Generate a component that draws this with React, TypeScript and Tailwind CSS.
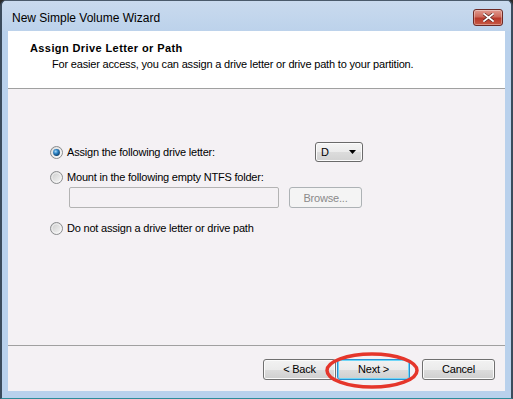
// New Simple Volume Wizard - assign drive letter page

import clsx from 'clsx'

function Radio({ checked }: { checked?: boolean }) {
  return (
    <svg width="13" height="13" viewBox="0 0 13 13" className="shrink-0">
      <defs>
        <linearGradient id="radio-fill" x1="0" y1="0" x2="1" y2="1">
          <stop offset="0" stopColor="#c9c9c9" />
          <stop offset="1" stopColor="#fafafa" />
        </linearGradient>
        <radialGradient id="radio-dot" cx="0.38" cy="0.35" r="0.7">
          <stop offset="0" stopColor="#a8d8f7" />
          <stop offset="0.45" stopColor="#2d83c4" />
          <stop offset="1" stopColor="#0b3a66" />
        </radialGradient>
      </defs>
      <circle cx="6.5" cy="6.5" r="6" fill="url(#radio-fill)" stroke="#8a8c8e" />
      <circle cx="6.5" cy="6.5" r="4.6" fill="none" stroke="#ffffff" strokeOpacity="0.6" />
      {checked && <circle cx="6.5" cy="6.5" r="3.4" fill="url(#radio-dot)" />}
    </svg>
  )
}

function Button({ label, primary }: { label: string; primary?: boolean }) {
  return (
    <div
      className={clsx(
        'w-[73px] h-[21px] rounded-[3px] border flex items-center justify-center text-[11px] tracking-[-0.2px] text-black',
        'bg-[linear-gradient(#f2f2f2_0%,#ebebeb_50%,#dddddd_50%,#cfcfcf_100%)]',
        primary
          ? 'border-[#2a8fd0] shadow-[inset_0_0_0_1px_#6fd6f7]'
          : 'border-[#707070] shadow-[inset_0_0_0_1px_#fbfbfb]'
      )}
    >
      {label}
    </div>
  )
}

export default function App() {
  return (
    <div className="w-[513px] h-[399px] bg-[#2a2a2a] font-['Liberation_Sans',Arial,sans-serif]">
      <div className="w-full h-full flex flex-col rounded-t-[6px] overflow-hidden border-x-2 border-b border-t border-x-[#3b4b5c] border-t-[#4a5a6b] border-b-[#2f8c99] bg-[#b9d1ec]">
        {/* title bar */}
        <div className="h-[30px] shrink-0 flex items-start bg-[linear-gradient(#c9daee,#bcd2eb)]">
          <span className="pl-[10px] pt-[10px] text-[12px] leading-[14px] text-black">New Simple Volume Wizard</span>
          <div className="ml-auto mr-[8px] mt-[8px] w-[30px] h-[17px] rounded-[3px] border border-[#6d2a26] bg-[linear-gradient(#e19a8f_0%,#cd6a5c_45%,#b8382a_55%,#c75a45_100%)] flex items-center justify-center shadow-[inset_0_0_0_1px_rgba(255,255,255,0.35)]">
            <svg width="11" height="9" viewBox="0 0 11 9">
              <path d="M1 1 L10 8 M10 1 L1 8" stroke="#5a2420" strokeWidth="3.2" strokeLinecap="square" />
              <path d="M1 1 L10 8 M10 1 L1 8" stroke="#ffffff" strokeWidth="1.8" strokeLinecap="square" />
            </svg>
          </div>
        </div>

        <div className="flex-1 flex flex-col mx-[6px] mb-[7px] bg-[#f4f1f4]">
          {/* header */}
          <div className="h-[58px] shrink-0 bg-white border-b border-[#a0a0a0] flex flex-col">
            <div className="pl-[22px] pt-[10px] text-[11px] leading-[14px] font-bold tracking-[0.4px] text-black">
              Assign Drive Letter or Path
            </div>
            <div className="pl-[44px] pt-[2px] text-[11px] leading-[14px] tracking-[-0.18px] text-black">
              For easier access, you can assign a drive letter or drive path to your partition.
            </div>
          </div>

          {/* options */}
          <div className="flex-1 flex flex-col pl-[42px] pt-[53px] text-[11px] leading-[14px] tracking-[-0.2px] text-black">
            <div className="h-[20px] flex items-center">
              <Radio checked />
              <span className="ml-[4px] w-[248px]">Assign the following drive letter:</span>
              <div className="w-[48px] h-[20px] rounded-[3px] border border-[#6a6a6a] bg-[linear-gradient(#f4f4f4_0%,#ebebeb_50%,#dcdcdc_50%,#d2d2d2_100%)] flex items-center pl-[5px] pr-[6px] shadow-[inset_0_0_0_1px_#fbfbfb]">
                <span>D</span>
                <svg className="ml-auto" width="7" height="4" viewBox="0 0 7 4">
                  <path d="M0 0 H7 L3.5 4 Z" fill="#000" />
                </svg>
              </div>
            </div>

            <div className="mt-[8px] h-[14px] flex items-center">
              <Radio />
              <span className="ml-[4px]">Mount in the following empty NTFS folder:</span>
            </div>

            <div className="mt-[3px] ml-[19px] flex items-center gap-[10px]">
              <div className="w-[210px] h-[21px] rounded-[2px] border border-[#b3b3b3] bg-[#f4f1f4]" />
              <div className="w-[73px] h-[21px] rounded-[3px] border border-[#adb2b5] bg-[#f4f4f4] flex items-center justify-center text-[#8a8a8a]">
                Browse...
              </div>
            </div>

            <div className="mt-[13px] h-[14px] flex items-center">
              <Radio />
              <span className="ml-[4px]">Do not assign a drive letter or drive path</span>
            </div>
          </div>

          {/* buttons */}
          <div className="h-[46px] shrink-0 border-t border-[#a0a0a0] flex items-start justify-end pt-[13px] pr-[10px] relative">
            <Button label="< Back" />
            <div className="ml-[1px]">
              <Button label="Next >" primary />
            </div>
            <div className="ml-[12px]">
              <Button label="Cancel" />
            </div>
            {/* red highlight ellipse around Next */}
            <svg className="absolute left-[316px] top-[5px] pointer-events-none" width="96" height="39" viewBox="0 0 96 39">
              <ellipse cx="48" cy="19.5" rx="45" ry="16.5" fill="none" stroke="#e5362b" strokeWidth="3.5" />
            </svg>
          </div>
        </div>
      </div>
    </div>
  )
}
